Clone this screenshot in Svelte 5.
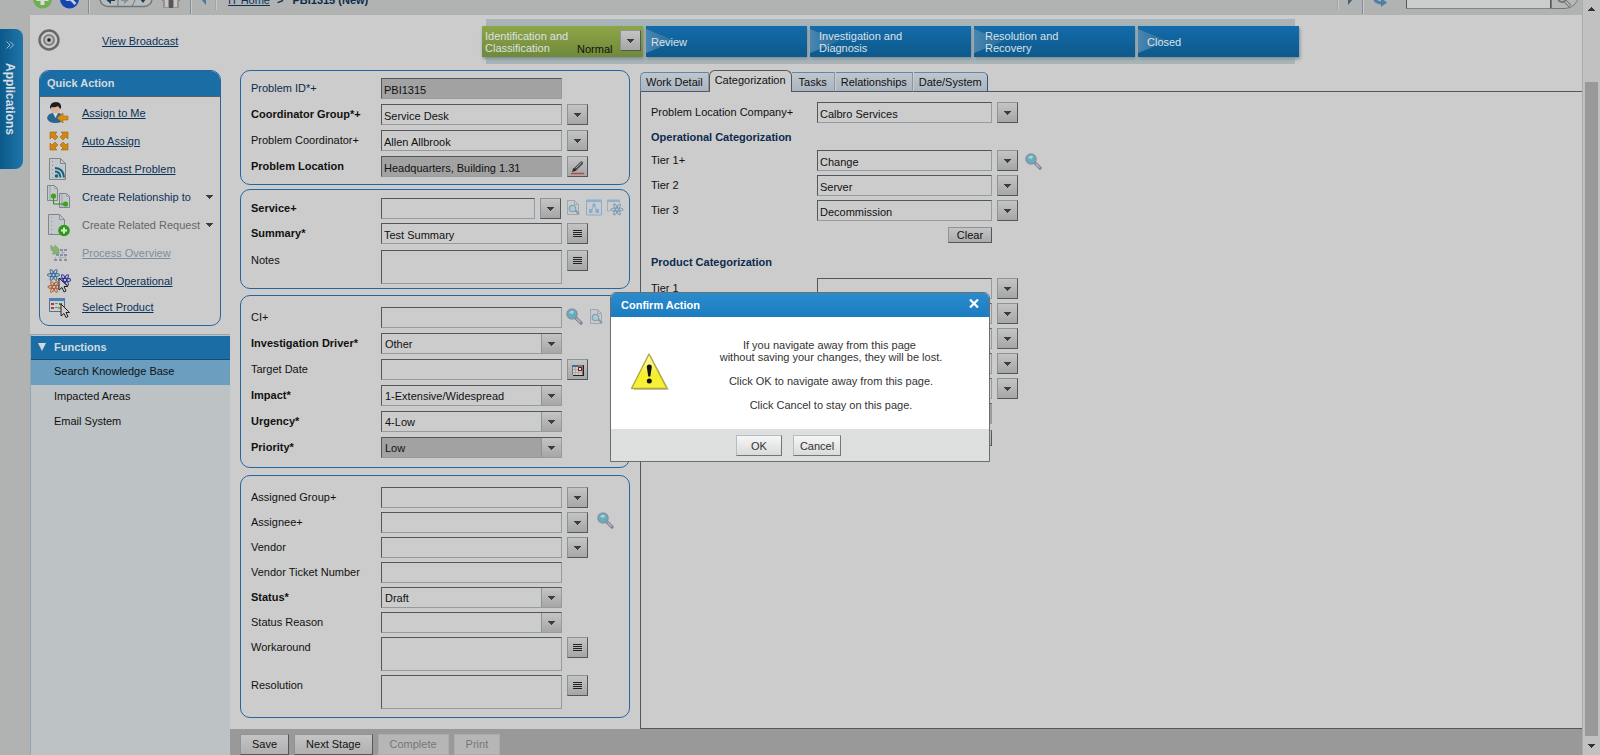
<script>
  const problemRows = [
    { id: 'pid', label: 'Problem ID*+', tone: 'navy', value: 'PBI1315', locked: true },
    { id: 'cgroup', label: 'Coordinator Group*+', tone: 'strong', value: 'Service Desk', button: 'menu' },
    { id: 'coord', label: 'Problem Coordinator+', value: 'Allen Allbrook', button: 'menu' },
    { id: 'ploc', label: 'Problem Location', tone: 'strong', value: 'Headquarters, Building 1.31', locked: true, button: 'edit' },
  ];
  const serviceRows = [
    { id: 'service', label: 'Service+', tone: 'strong', value: '', button: 'menu', short: true, extras: ['doc', 'tree', 'atom'] },
    { id: 'summary', label: 'Summary*', tone: 'strong', value: 'Test Summary', button: 'lines' },
    { id: 'notes', label: 'Notes', kind: 'area', value: '', button: 'lines' },
  ];
  const driverRows = [
    { id: 'ci', label: 'CI+', value: '', extras: ['search', 'doc'] },
    { id: 'driver', label: 'Investigation Driver*', tone: 'strong', kind: 'select', value: 'Other' },
    { id: 'target', label: 'Target Date', value: '', button: 'date' },
    { id: 'impact', label: 'Impact*', tone: 'strong', kind: 'select', value: '1-Extensive/Widespread' },
    { id: 'urgency', label: 'Urgency*', tone: 'strong', kind: 'select', value: '4-Low' },
    { id: 'priority', label: 'Priority*', tone: 'strong', kind: 'select', value: 'Low', locked: true },
  ];
  const assignRows = [
    { id: 'agroup', label: 'Assigned Group+', value: '', button: 'menu' },
    { id: 'assignee', label: 'Assignee+', value: '', button: 'menu', extras: ['search'], spaced: true },
    { id: 'vendor', label: 'Vendor', value: '', button: 'menu' },
    { id: 'ticket', label: 'Vendor Ticket Number', value: '' },
    { id: 'status', label: 'Status*', tone: 'strong', kind: 'select', value: 'Draft' },
    { id: 'reason', label: 'Status Reason', kind: 'select', value: '' },
    { id: 'workaround', label: 'Workaround', kind: 'area', value: '', button: 'lines' },
    { id: 'resolution', label: 'Resolution', kind: 'area', value: '', button: 'lines' },
  ];
  const panels = [
    { cls: 'problem', rows: problemRows },
    { cls: 'service', rows: serviceRows },
    { cls: 'driver', rows: driverRows },
    { cls: 'assign', rows: assignRows },
  ];
  const actions = [
    { label: 'Assign to Me', icon: 'user' },
    { label: 'Auto Assign', icon: 'arrows' },
    { label: 'Broadcast Problem', icon: 'feed' },
    { label: 'Create Relationship to', icon: 'relate', menu: true },
    { label: 'Create Related Request', icon: 'add', menu: true, dim: true },
    { label: 'Process Overview', icon: 'process', faded: true },
    { label: 'Select Operational', icon: 'operational' },
    { label: 'Select Product', icon: 'product' },
  ];
  const stages = ['Review', 'Investigation and Diagnosis', 'Resolution and Recovery', 'Closed'];
  const tabs = ['Work Detail', 'Categorization', 'Tasks', 'Relationships', 'Date/System'];
  const opTiers = [
    { id: 'op1', label: 'Tier 1+', value: 'Change', search: true },
    { id: 'op2', label: 'Tier 2', value: 'Server' },
    { id: 'op3', label: 'Tier 3', value: 'Decommission' },
  ];
  const productFields = ['Product Tier 2', 'Product Tier 3', 'Product Name', 'Model Version'];
</script>

{#snippet caret()}
  <svg class="caret" width="7" height="4" viewBox="0 0 7 4" aria-hidden="true"><path d="M0 0h7v1H6v1H5v1H4v1H3V3H2V2H1V1H0z" fill="#3c3c3c" /></svg>
{/snippet}

{#snippet glyph(name)}
  {#if name === 'search'}
    <svg width="17" height="17" viewBox="0 0 17 17"><path d="M10 10l5 5" stroke="#7d8490" stroke-width="3.2" stroke-linecap="round" /><path d="M10.5 10.5l4 4" stroke="#b8bcc4" stroke-width="1.2" /><circle cx="6" cy="6" r="5" fill="#63aebf" stroke="#8794a3" stroke-width="1.6" /><path d="M3 5q1-3 5-2l-1 3z" fill="#a4d3da" /></svg>
  {:else if name === 'doc'}
    <svg width="16" height="17" viewBox="0 0 16 17"><path d="M2.5 1.5h7l4 4v10h-11z" fill="#c8cbcd" stroke="#9fa7ae" /><path d="M9.500 1.500v4h4" fill="none" stroke="#9fa7ae" /><path d="M10.500 11.500l3.500 3.500" stroke="#8c98a3" stroke-width="2" /><circle cx="7.500" cy="9.500" r="3.200" fill="#a8ccd3" stroke="#8da0ad" stroke-width="1.300" /></svg>
  {:else if name === 'tree'}
    <svg width="16" height="17" viewBox="0 0 16 17"><path d="M.5 1h15v15H.5z" fill="#c6ccd1" stroke="#8fa9c0" /><path d="M0 1h16v2H0z" fill="#8fb0cd" /><path d="M8 6l-3 6M8 6l3 6" stroke="#8fabc4" /><circle cx="8" cy="6" r="1.800" fill="#88aecd" /><rect x="3" y="10" width="3.500" height="4" fill="#88aecd" /><rect x="9.500" y="10" width="3.500" height="4" fill="#88aecd" /></svg>
  {:else if name === 'atom'}
    <svg width="17" height="17" viewBox="0 0 17 17"><path d="M.5 1h12v3M.5 1v11h3" fill="none" stroke="#9eb0c0" /><path d="M0 1h12v2H0z" fill="#8fb0cd" /><g fill="none" stroke="#7b9dbb" stroke-width="1.200"><ellipse cx="10" cy="10.500" rx="6" ry="1.500" /><ellipse cx="10" cy="10.500" rx="6" ry="1.500" transform="rotate(60 10 10.500)" /><ellipse cx="10" cy="10.500" rx="6" ry="1.500" transform="rotate(120 10 10.500)" /></g></svg>
  {:else if name === 'lines'}
    <svg width="9" height="8" viewBox="0 0 9 8"><path d="M0 .5h9M0 2.500h9M0 4.500h9M0 6.500h9" stroke="#222" /></svg>
  {:else if name === 'date'}
    <svg width="12" height="11" viewBox="0 0 12 11"><path d="M0 0h11v10H0z" fill="#777" /><path d="M1 2h9v8H1z" fill="#ccc" /><path d="M0 0h6v2H0z" fill="#3c6d99" /><path d="M1 4.500h9M1 7.500h9M3.500 2v8M6.500 2v8" stroke="#aaa" /><path d="M11 0h1v11H1v-1h10z" fill="#222" /><path d="M6 2h4v4H6z" fill="#8e1414" /><path d="M7 3h2v2H7z" fill="#ddd" /></svg>
  {:else if name === 'edit'}
    <svg width="17" height="17" viewBox="0 0 17 17"><path d="M2 14.500h13" stroke="#b04a42" stroke-width="1.500" /><path d="M6 10.500L12.500 4" stroke="#4a4f55" stroke-width="3.200" stroke-linecap="round" /><path d="M7 9L12.500 3.500" stroke="#9fa4a9" /><path d="M3 13l1.500-4L7 11.500z" fill="#222" /></svg>
  {:else}
    {@render caret()}
  {/if}
{/snippet}

{#snippet actionIcon(name)}
  <svg width="24" height="24" viewBox="0 0 24 24" aria-hidden="true">
    {#if name === 'user'}
      <path d="M0 17q1-5 7-5h3q6 0 7 5-1 5-8.500 5T0 17z" fill="#2a6790" /><path d="M6 12l2.500 5 2.500-5z" fill="#ddd" /><circle cx="8.500" cy="8" r="4.600" fill="#d8b498" /><path d="M3 8Q2.500 1 9 1q6 0 5 7-2-1-3-3-3 2-6 1-1 1-2 2z" fill="#1d1d1f" /><path d="M10 17l6-5v3h5v4h-5v3z" fill="#d98d14" stroke="#a8690c" stroke-width=".6" />
    {:else if name === 'arrows'}
      <g fill="#cf8716" stroke="#a0650d" stroke-width=".6"><path d="M3 3h7L8 5l3 3-3 3-3-3-2 2z" /><path d="M21 3v7l-2-2-3 3-3-3 3-3-2-2z" /><path d="M3 21v-7l2 2 3-3 3 3-3 3 2 2z" /><path d="M21 21h-7l2-2-3-3 3-3 3 3 2-2z" /></g>
    {:else if name === 'feed'}
      <path d="M2.500 1.500h11l5 5v16h-16z" fill="#c4c8ca" stroke="#7c868e" /><path d="M13.500 1.500v5h5" fill="none" stroke="#7c868e" /><path d="M5.500 4v17" stroke="#8c959c" stroke-dasharray="1 3" /><circle cx="9.500" cy="19" r="1.800" fill="#12607e" /><path d="M8 14.500q5 0 5.500 6M8 11q8.500.5 9 9.500" fill="none" stroke="#12607e" stroke-width="2" />
    {:else if name === 'relate'}
      <path d="M.5.5h7l3 3v12H.5z" fill="#c4c8ca" stroke="#7c868e" /><path d="M7.500.5v3h3M3 1v14" fill="none" stroke="#9ca5ac" /><path d="M12.500 8.500h7l3 3v11h-10z" fill="#c4c8ca" stroke="#7c868e" /><path d="M19.500 8.500v3h3M15 9v13" fill="none" stroke="#9ca5ac" /><path d="M6.500 11v8h11" fill="none" stroke="#2f8a17" /><circle cx="6.500" cy="11" r="2.600" fill="#3aa51b" /><circle cx="18.500" cy="19" r="2.600" fill="#3aa51b" />
    {:else if name === 'add'}
      <path d="M1.500 1.500h11l5 5v15h-16z" fill="#c4c8ca" stroke="#7c868e" /><path d="M12.500 1.500v5h5" fill="none" stroke="#8c959c" /><path d="M4.500 4v17" stroke="#8c959c" stroke-dasharray="1 3" /><circle cx="17" cy="17.500" r="5.800" fill="#2c9c14" /><path d="M17 14.500v6M14 17.500h6" stroke="#e4ece2" stroke-width="2" />
    {:else if name === 'process'}
      <path d="M4 4q1 3 4 2V4l4 4v5H5l2-2Q3 10 4 4z" fill="#85b276" stroke="#77a268" stroke-width=".6" /><g fill="#8b8fa6"><path d="M13 8h3v2h-3zM17 8h3v2h-3zM9 13h3v2H9zM13 13h3v2h-3zM17 13h3v2h-3zM7 18h3v2H7zM12 18h3v2h-3zM17 18h3v2h-3z" /></g><path d="M15.500 10v3M14 11.500h4M11 16.500h7M8.500 16v2M13.500 15v3M18.500 15v3" stroke="#a9adbd" />
    {:else if name === 'operational'}
      <g fill="none" stroke-width="1.100"><g stroke="#3d6f9c"><ellipse cx="6.500" cy="6" rx="6" ry="1.600" /><ellipse cx="6.500" cy="6" rx="6" ry="1.600" transform="rotate(60 6.500 6)" /><ellipse cx="6.500" cy="6" rx="6" ry="1.600" transform="rotate(120 6.500 6)" /></g><g stroke="#35359c"><ellipse cx="18" cy="11" rx="6" ry="1.600" /><ellipse cx="18" cy="11" rx="6" ry="1.600" transform="rotate(60 18 11)" /><ellipse cx="18" cy="11" rx="6" ry="1.600" transform="rotate(120 18 11)" /></g><g stroke="#b0653a"><ellipse cx="7" cy="18" rx="6" ry="1.600" /><ellipse cx="7" cy="18" rx="6" ry="1.600" transform="rotate(60 7 18)" /><ellipse cx="7" cy="18" rx="6" ry="1.600" transform="rotate(120 7 18)" /></g></g><path d="M12 9v12l3-2.500 2 4.500 2-1-2-4.500h4z" fill="#ccc" stroke="#222" />
    {:else}
      <path d="M2.500 3.500h15v13h-15z" fill="#c9ced2" stroke="#4f7396" /><path d="M2 3h16v3H2z" fill="#4b80b0" /><path d="M4 8h3v2H4zM4 12h3v2H4z" fill="#b43a2c" /><path d="M8 8.500h3M8 12.500h3" stroke="#78828c" /><path d="M12 8h3v2h-3z" fill="#3a8e35" /><path d="M11 12h3v2h-3z" fill="#c89a1d" /><path d="M14 9v12l3-2.500 2 4 2-1-2-4h3.500z" fill="#ccc" stroke="#222" />
    {/if}
  </svg>
{/snippet}

<div class="page">
  <div class="main">
    <div class="toolbar">
      <div class="tools">
        <button class="plain" aria-label="New"><svg width="19" height="20" viewBox="0 0 19 20"><circle cx="9.500" cy="10" r="9.500" fill="#6fae52" /><path d="M9.500 4v12M3.500 10h12" stroke="#d6dfd2" stroke-width="4" /></svg></button>
        <button class="plain" aria-label="Find"><svg width="19" height="20" viewBox="0 0 19 20"><circle cx="9.500" cy="10" r="9.500" fill="#1443b4" /><circle cx="8" cy="7.500" r="3.500" fill="none" stroke="#ccd2dc" stroke-width="2" /><path d="M10.500 10l5 5" stroke="#ccd2dc" stroke-width="2.600" /></svg></button>
        <i class="rule"></i>
        <svg width="54" height="18" viewBox="0 0 54 18" role="img" aria-label="History"><rect x="1" y="1" width="52" height="15.500" rx="8" fill="#b8bbbb" stroke="#70767a" stroke-width="1.400" /><path d="M19 1v15M36 2q2 7-3 14" stroke="#70767a" fill="none" /><path d="M6 9l6-5v3h4v4h-4v3z" fill="#173f5c" /><path d="M31 9l-6-5v3h-3v4h3v3z" fill="#8a8e90" /><path d="M41 9h6l-3 4z" fill="#173f5c" /></svg>
        <button class="plain home" aria-label="Home"><svg width="20" height="20" viewBox="0 0 20 20"><path d="M1 9h18v3H1z" fill="#85817e" /><path d="M2 10h16v9H2z" fill="#96928f" /><path d="M4 10h3v8H4zM13 10h3v8h-3z" fill="#c5c5c5" /><path d="M8 10h4v9H8z" fill="#5a5654" /></svg></button>
        <i class="rule"></i>
        <svg width="5" height="12" viewBox="0 0 5 12" aria-hidden="true"><path d="M5 0v12L0 6z" fill="#4f7898" /></svg>
        <i class="rule soft"></i>
        <nav class="crumbs"><a href="#home">IT Home</a><span>&gt;</span><b>PBI1315 (New)</b></nav>
        <i class="rule soft push"></i>
        <svg width="5" height="12" viewBox="0 0 5 12" aria-hidden="true"><path d="M0 0v12l5-6z" fill="#41627c" /></svg>
        <i class="rule"></i>
        <button class="plain refresh" aria-label="Refresh"><svg width="17" height="18" viewBox="0 0 17 18"><path d="M3 5q-4 7 6 8" fill="none" stroke="#4f7ea6" stroke-width="3" /><path d="M8 8l6 4.500L8 17z" fill="#4f7ea6" /></svg></button>
        <div class="find"><input aria-label="Search" /><button aria-label="Search"><svg width="18" height="18" viewBox="0 0 18 18"><circle cx="6" cy="7" r="4" fill="none" stroke="#70767c" stroke-width="2" /><path d="M9 10l5 5" stroke="#6e747a" stroke-width="3.400" /><path d="M9.500 10.500l4 4" stroke="#c6c9cb" stroke-width="1.200" /></svg></button></div>
      </div>
    </div>

    <div class="body">
      <div class="rail">
        <button class="apps"><svg width="8" height="8" viewBox="0 0 8 8" aria-hidden="true"><path d="M.5.5L4 4 .5 7.500M4 .5L7.500 4 4 7.500" fill="none" stroke="#9cc0d8" /></svg><span>Applications</span></button>
      </div>

      <div class="content">
        <header class="top">
          <svg width="24" height="24" viewBox="0 0 24 24" aria-hidden="true"><circle cx="12" cy="12" r="9.500" fill="#bbb" stroke="#66696b" stroke-width="2.400" /><circle cx="12" cy="12" r="7.200" fill="none" stroke="#dadada" /><circle cx="12" cy="12" r="5" fill="none" stroke="#777" stroke-width="1.600" /><circle cx="12" cy="12" r="1.800" fill="#222" /></svg>
          <a class="broadcast" href="#broadcast">View Broadcast</a>
          <div class="band">
            <div class="stage current"><span>Identification and Classification</span><em>Normal</em><button class="sq" aria-label="Stage menu">{@render caret()}</button></div>
            {#each stages as s}
              <div class="stage"><span class:wide={s.length > 10}>{s}</span></div>
            {/each}
          </div>
        </header>

        <div class="columns">
          <aside>
            <section class="quick">
              <h2>Quick Action</h2>
              <ul>
                {#each actions as a}
                  <li>
                    {@render actionIcon(a.icon)}
                    {#if a.menu}
                      <button class="plain text" class:dim={a.dim}>{a.label}{@render caret()}</button>
                    {:else}
                      <a href="#action" class:faded={a.faded}>{a.label}</a>
                    {/if}
                  </li>
                {/each}
              </ul>
            </section>
            <nav class="functions">
              <h2><svg width="8" height="8" viewBox="0 0 8 8" aria-hidden="true"><path d="M0 0h8L4 8z" fill="#d4d8da" /></svg>Functions</h2>
              <a class="on" href="#kb">Search Knowledge Base</a>
              <a href="#areas">Impacted Areas</a>
              <a href="#email">Email System</a>
            </nav>
          </aside>

          <div class="work">
            <div class="forms">
              <div class="fields">
                {#each panels as p}
                  <section class="panel {p.cls}">
                    {#each p.rows as r}
                      <div class="row">
                        <label for={r.id} class={r.tone ?? ''}>{r.label}</label>
                        {#if r.kind === 'select'}
                          <div class="pick" class:locked={r.locked}>
                            <select id={r.id}><option>{r.value}</option></select>
                            <span class="sq">{@render caret()}</span>
                          </div>
                        {:else if r.kind === 'area'}
                          <textarea id={r.id}></textarea>
                        {:else}
                          <input id={r.id} class:short={r.short} class:locked={r.locked} readonly={r.locked} value={r.value} />
                        {/if}
                        {#if r.button}
                          <button class="sq" aria-label="{r.label} options">{@render glyph(r.button)}</button>
                        {/if}
                        {#if r.extras}
                          <div class="extras" class:spaced={r.spaced}>
                            {#each r.extras as e}<button class="plain" aria-label="{r.label} {e}">{@render glyph(e)}</button>{/each}
                          </div>
                        {/if}
                      </div>
                    {/each}
                  </section>
                {/each}
              </div>

              <div class="detail">
                <div class="tabs" role="tablist">
                  {#each tabs as t}
                    <button role="tab" aria-selected={t === 'Categorization'} class:active={t === 'Categorization'}>{t}</button>
                  {/each}
                </div>
                <div class="pane">
                  <div class="row"><label for="company">Problem Location Company+</label><input id="company" value="Calbro Services" /><button class="sq" aria-label="Company options">{@render caret()}</button></div>
                  <h3>Operational Categorization</h3>
                  {#each opTiers as t}
                    <div class="row">
                      <label for={t.id}>{t.label}</label><input id={t.id} value={t.value} /><button class="sq" aria-label="{t.label} options">{@render caret()}</button>
                      {#if t.search}<div class="extras"><button class="plain" aria-label="Find category">{@render glyph('search')}</button></div>{/if}
                    </div>
                  {/each}
                  <div class="clear"><button>Clear</button></div>
                  <h3 class="tall">Product Categorization</h3>
                  <div class="row"><label for="pt1">Tier 1</label><input id="pt1" /><button class="sq" aria-label="Tier 1 options">{@render caret()}</button></div>
                  {#each productFields as f}
                    <div class="row"><span></span><input aria-label={f} /><button class="sq" aria-label="{f} options">{@render caret()}</button></div>
                  {/each}
                  <div class="row"><span></span><input class="locked" aria-label="Manufacturer" readonly /></div>
                  <div class="clear"><button aria-label="Clear product"></button></div>
                </div>
              </div>
            </div>
            <footer>
              <button>Save</button><button>Next Stage</button><button disabled>Complete</button><button disabled>Print</button>
            </footer>
          </div>
        </div>
      </div>
    </div>
  </div>

  <div class="scroll" aria-hidden="true">
    <svg width="7" height="4" viewBox="0 0 7 4"><path d="M3 0h1v1h1v1h1v1h1v1H0V3h1V2h1V1h1z" fill="#333" /></svg>
    <i></i>
    <svg width="7" height="4" viewBox="0 0 7 4"><path d="M0 0h7v1H6v1H5v1H4v1H3V3H2V2H1V1H0z" fill="#333" /></svg>
  </div>

  <div class="dialog" role="dialog" aria-labelledby="dlg">
    <h2><span id="dlg">Confirm Action</span><button class="plain" aria-label="Close"><svg width="10" height="9" viewBox="0 0 10 9"><path d="M1 .5l8 8M9 .5l-8 8" stroke="#fff" stroke-width="2.200" /></svg></button></h2>
    <div class="message">
      <svg width="40" height="40" viewBox="0 0 40 40" aria-hidden="true"><defs><linearGradient id="warn" x1="0" y1="0" x2="0" y2="1"><stop offset="0" stop-color="#fdfbc0" /><stop offset=".6" stop-color="#f6ee2c" /><stop offset="1" stop-color="#f7f23a" /></linearGradient></defs><path d="M21 4l18 34H4z" fill="#000" opacity=".22" /><path d="M19 2L37 36.500H1.500z" fill="url(#warn)" stroke="#b3a83a" stroke-width="1.400" stroke-linejoin="round" /><path d="M16.800 15q0-2.500 2.500-2.500t2.500 2.500l-1.500 9.500h-2z" fill="#111" /><circle cx="19.300" cy="29" r="2.500" fill="#111" /></svg>
      <div>
        <p>If you navigate away from this page&nbsp;<br />without saving your changes, they will be lost.</p>
        <p>Click OK to navigate away from this page.</p>
        <p>Click Cancel to stay on this page.</p>
      </div>
    </div>
    <div class="choices"><button>OK</button><button>Cancel</button></div>
  </div>
</div>

<style>
  :global(body) { margin: 0; background: #b0b3b2; }
  .page { display: flex; min-height: 100vh; font: 11px/13px "Liberation Sans", Arial, sans-serif; color: #111; background: #b0b3b2; }
  .page * { box-sizing: border-box; }
  .main { flex: 1; min-width: 0; display: flex; flex-direction: column; }
  h2, h3, p, ul { margin: 0; padding: 0; font-size: 11px; }
  ul { list-style: none; }
  button, input, select, textarea { font: inherit; color: inherit; margin: 0; border-radius: 0; }
  button { display: flex; align-items: center; justify-content: center; padding: 0; }
  svg { display: block; flex: none; }
  a { color: #0b3258; }

  .plain { border: 0; background: none; }
  .sq { display: flex; align-items: center; justify-content: center; flex: none; width: 21px; height: 21px; padding-top: 1px; border: 1px solid #52575c; border-top-color: #8b9499; border-left-color: #8b9499; background: linear-gradient(#c4c4c4, #a6a6a6); }

  .toolbar { height: 15px; overflow: hidden; display: flex; align-items: flex-end; }
  .tools { flex: 1; height: 30px; padding: 0 3px 2px 33px; display: flex; align-items: center; gap: 8px; }
  .rule { width: 2px; height: 30px; background: #848d92; border-right: 1px solid #c6c9ca; margin: 0 1px; }
  .rule.soft { height: 22px; background: #a0a6a8; }
  .push { margin-left: auto; }
  .crumbs { display: flex; gap: 7px; margin-left: 2px; padding-top: 2px; color: #0b2b4c; }
  .crumbs span { margin-right: 2px; font-weight: bold; }
  .refresh { margin-right: 8px; }
  .find { display: flex; align-self: flex-start; height: 24px; }
  .find input { width: 145px; border: 1px solid #52575c; border-bottom-color: #7d8588; background: #ccc; }
  .find button { width: 28px; border: 1px solid #777; border-radius: 0 0 14px 0; background: #b8b8b8; padding-top: 6px; }

  .body { flex: 1; display: flex; }
  .rail { width: 30px; flex: none; padding-top: 14px; }
  .apps { flex-direction: column; justify-content: flex-start; gap: 14px; width: 23px; height: 140px; padding: 12px 4px 0 0; border: 0; border-radius: 0 8px 8px 0; background: linear-gradient(90deg, #0b5988, #1f76ab); color: #d8dee2; }
  .apps span { writing-mode: vertical-rl; font-size: 12px; font-weight: bold; }

  .content { flex: 1; min-width: 0; background: #ccc; display: flex; flex-direction: column; }
  .top { display: flex; align-items: flex-start; height: 55px; padding: 4px 0 0 7px; }
  .top > svg { margin-top: 9px; }
  .broadcast { width: 380px; margin: 16px 0 0 41px; flex: none; }
  .band { display: flex; gap: 3px; padding: 7px 0; background: linear-gradient(#a8b4b7, #a8b4b7) center / calc(100% - 8px) 100% no-repeat; }
  .stage { position: relative; width: 161px; height: 31px; padding-left: 5px; display: flex; align-items: center; line-height: 12px; color: #dce2e6; background: linear-gradient(#136caa, #0d598c); box-shadow: 1px 2px 3px #7f9097; }
  .stage::before { content: ''; position: absolute; left: 0; top: 3px; width: 30px; height: 24px; clip-path: polygon(0 0, 100% 50%, 0 100%); background: linear-gradient(90deg, #4a86b0, #24699c); }
  .stage span { position: relative; }
  .stage .wide { width: 100px; }
  .stage:nth-child(3) { padding-left: 9px; }
  .stage:nth-child(4) { padding-left: 11px; }
  .stage:nth-child(5) { padding-left: 9px; }
  .stage.current { padding-left: 3px; background: linear-gradient(#8ea547, #70893a); }
  .current::before { display: none; }
  .current span { width: 92px; }
  .current em { font-style: normal; color: #111; align-self: flex-end; padding-bottom: 2px; }
  .current .sq { margin: 4px 2px 0 auto; align-self: flex-start; }

  .columns { flex: 1; display: flex; }
  aside { width: 200px; flex: none; display: flex; flex-direction: column; }
  .quick { margin: 0 9px 8px 9px; border: 1px solid #2666a0; border-radius: 10px; overflow: hidden; }
  .quick h2 { height: 26px; padding: 6px 7px; background: #1b6ea5; color: #d5dade; border-bottom: 1px solid #57616a; }
  .quick ul { padding: 2px 0 6px; }
  .quick li { display: flex; align-items: center; height: 28px; padding: 0 7px; gap: 11px; }
  .quick li:last-child { height: 24px; }
  .text { flex: 1; justify-content: space-between; color: #0b3258; white-space: nowrap; }
  .dim { color: #666; }
  .faded { color: #7a8fa1; }
  .functions { flex: 1; background: #bdc2c5; border-left: 1px solid #93a5b0; border-top: 1px solid #93a5b0; }
  .functions h2 { display: flex; align-items: center; gap: 8px; height: 25px; padding: 0 7px 1px; background: #1b6ea5; color: #d5dade; border-bottom: 1px solid #12507c; border-top: 1px solid #bdc2c5; }
  .functions a { display: flex; align-items: center; height: 25px; padding: 0 23px 3px; color: #111; text-decoration: none; }
  .functions .on { background: #6b9ebf; }

  .work { flex: 1; min-width: 0; display: flex; flex-direction: column; }
  .forms { flex: 1; display: flex; padding-left: 10px; }
  .fields { width: 390px; flex: none; display: flex; flex-direction: column; }
  .panel { display: flex; flex-direction: column; gap: 4px; padding: 7px 0 9px 10px; border: 1px solid #2666a0; border-radius: 10px; margin-bottom: 4px; }
  .problem { gap: 5px; padding-bottom: 7px; }
  .service { padding: 8px 0 4px 10px; margin-bottom: 6px; }
  .service .row:last-child { margin-top: 2px; }
  .driver { gap: 5px; padding: 11px 0 9px 10px; margin-bottom: 7px; }
  .assign { padding: 11px 0 8px 10px; margin-bottom: 10px; }
  .row { display: flex; align-items: flex-start; }
  .row label, .row > span:empty { width: 130px; flex: none; padding-top: 4px; }
  .strong { font-weight: bold; }
  .navy { color: #0b2b4c; }
  .row input, .row textarea, .pick { width: 181px; height: 21px; flex: none; padding: 2px 2px 0; border: 1px solid #959c9f; border-top-color: #52575c; border-left-color: #52575c; background: #ccc; outline: 0; resize: none; }
  .row textarea { height: 34px; }
  .row .short { width: 154px; }
  .row .locked { background: #a2a2a2; }
  .row > .sq { margin-left: 5px; }
  .pick { display: grid; grid-template-columns: 1fr 20px; padding: 0; }
  .pick select { grid-area: 1 / 1 / 2 / 3; appearance: none; border: 0; background: none; padding: 1px 3px 0; height: 19px; outline: 0; }
  .pick .sq { grid-area: 1 / 2; width: 20px; height: 19px; border-width: 0 0 0 1px; pointer-events: none; }
  .extras { display: flex; gap: 5px; margin-left: 4px; padding-top: 1px; }
  .extras.spaced { margin-left: 9px; padding: 0; }

  .detail { flex: 1; margin-left: 10px; display: flex; flex-direction: column; }
  .tabs { display: flex; align-items: flex-end; height: 22px; box-shadow: inset 0 -1px #52575c; }
  .tabs button { height: 20px; padding: 0 5px; border: 1px solid #6286a8; border-bottom-color: #52575c; border-right-color: #8a96a2; border-left: 0; background: linear-gradient(#c0c6cc, #a9b5c1); margin-right: 1px; }
  .tabs button:first-child { border-left: 1px solid #6286a8; border-radius: 5px 0 0 0; margin: 0; }
  .tabs button:last-child { border-radius: 0 5px 0 0; border-right-color: #2d5580; }
  .tabs button:nth-child(3) { padding: 0 7px; }
  .tabs .active { height: 22px; padding: 0 5px 3px; border: 1px solid #52575c; border-bottom: 0; border-radius: 6px 6px 0 0; background: #ccc; margin: 0; }
  .pane { flex: 1; padding: 10px 0 0 10px; border-left: 1px solid #52575c; border-bottom: 1px solid #52575c; display: flex; flex-direction: column; gap: 4px; }
  .pane .row label, .pane .row > span:empty { width: 166px; }
  .pane .row input { width: 175px; }
  .pane .extras { margin-left: 7px; padding-top: 3px; margin-bottom: -3px; }
  h3 { height: 19px; padding-top: 4px; color: #0b2b4c; }
  .tall { height: 27px; padding-top: 9px; }
  .clear { display: flex; width: 341px; justify-content: flex-end; padding-top: 2px; }
  .clear button { width: 44px; height: 16px; border: 1px solid #52575c; border-top-color: #8b9499; border-left-color: #8b9499; background: linear-gradient(#c4c4c4, #ababab); }
  footer { height: 26px; padding: 5px 0 0 10px; background: #999; display: flex; gap: 5px; }
  footer button { height: 21px; padding: 0 11px; border: 1px solid #52575c; border-top-color: #8b9499; border-left-color: #8b9499; background: linear-gradient(#c4c4c4, #b0b0b0); }
  footer button:disabled { color: #777; border-color: #a8aeb0; background: #b6b6b6; }

  .scroll { width: 18px; flex: none; display: flex; flex-direction: column; align-items: center; gap: 8px; padding: 7px 0; background: #c1c1c1; border-left: 1px solid #a4adb3; }
  .scroll i { flex: 1; width: 13px; margin-top: 63px; background: #999; }

  .dialog { position: absolute; left: 50%; top: 292px; width: 380px; margin-left: -190px; border: 1px solid #6a6e70; border-radius: 6px 6px 0 0; overflow: hidden; background: #fff; color: #333; }
  .dialog h2 { display: flex; justify-content: space-between; height: 24px; padding: 6px 10px; background: linear-gradient(#2a8bcd, #1b7cc0); color: #fff; }
  .dialog h2 button { height: 9px; }
  .message { display: flex; align-items: center; height: 112px; padding: 0 19px; gap: 20px; line-height: 12px; }
  .message > svg { margin-bottom: 3px; }
  .message > div { flex: 1; text-align: center; padding: 3px 0 0 2px; }
  .message p + p { margin-top: 12px; }
  .choices { display: flex; gap: 11px; height: 32px; padding: 6px 0 0 125px; background: #dcdfde; }
  .choices button { width: 48px; height: 21px; border: 1px solid #6d777d; border-top-color: #b4bdc2; border-left-color: #b4bdc2; background: linear-gradient(#f6f6f6, #dadada); padding-top: 1px; }
  .choices button:first-child { width: 46px; }
</style>
